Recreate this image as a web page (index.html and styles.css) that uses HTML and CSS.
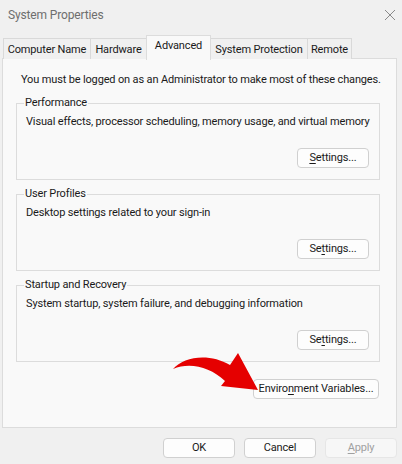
FILE: index.html
```html
<!DOCTYPE html>
<html>
<head>
<meta charset="utf-8">
<link rel="stylesheet" href="styles.css">
</head>
<body>
<div class="window">
  <div class="titlebar">
    <span class="title">System Properties</span>
    <svg class="close" width="12" height="12" viewBox="0 0 12 12"><path d="M1 1 L11 11 M11 1 L1 11" stroke="#8a8a8a" stroke-width="1" fill="none"/></svg>
  </div>
  <div class="tabs">
    <div class="tab t1">Computer Name</div>
    <div class="tab t2">Hardware</div>
    <div class="tab t3 active">Advanced</div>
    <div class="tab t4">System Protection</div>
    <div class="tab t5">Remote</div>
  </div>
  <div class="panel">
    <p class="note">You must be logged on as an Administrator to make most of these changes.</p>
    <fieldset class="group">
      <legend>Performance</legend>
      <p class="desc">Visual effects, processor scheduling, memory usage, and virtual memory</p>
      <div class="row"><button class="btn"><u>S</u>ettings...</button></div>
    </fieldset>
    <fieldset class="group">
      <legend>User Profiles</legend>
      <p class="desc">Desktop settings related to your sign-in</p>
      <div class="row"><button class="btn">Se<u>t</u>tings...</button></div>
    </fieldset>
    <fieldset class="group">
      <legend>Startup and Recovery</legend>
      <p class="desc">System startup, system failure, and debugging information</p>
      <div class="row"><button class="btn">Se<u>t</u>tings...</button></div>
    </fieldset>
    <div class="envrow"><button class="btn env">Enviro<u>n</u>ment Variables...</button></div>
  </div>
  <div class="footer">
    <button class="btn foot">OK</button>
    <button class="btn foot">Cancel</button>
    <button class="btn foot disabled"><u>A</u>pply</button>
  </div>
  <svg class="arrow" width="100" height="50" viewBox="0 0 100 50">
    <path d="M1 17 C 12 4, 38 1, 58 13 L 66 1 L 86 38 L 49 34 L 53 29 C 38 15, 18 10, 1 17 Z" fill="#e50000"/>
  </svg>
</div>
</body>
</html>
```
FILE: styles.css
```css
html, body {
  margin: 0;
  padding: 0;
}
body {
  width: 402px;
  height: 464px;
  background: #f0f0f0;
  font-family: Roboto, "Liberation Sans", sans-serif;
  font-size: 11px;
  letter-spacing: -0.15px;
  color: #1a1a1a;
  overflow: hidden;
}
.window {
  position: relative;
  width: 402px;
  height: 464px;
}
.titlebar {
  height: 35px;
  display: flex;
  align-items: flex-start;
  justify-content: space-between;
}
.title {
  margin: 8px 0 0 8px;
  font-size: 12px;
  color: #6e6e6e;
}
.close {
  margin: 9px 6px 0 0;
}
.tabs {
  display: flex;
  align-items: flex-end;
  height: 24px;
  margin-left: 3px;
  position: relative;
  z-index: 2;
}
.tab {
  line-height: 21px;
  border: 1px solid #d9d9d9;
  border-bottom: none;
  border-right: none;
  background: #f0f0f0;
  text-align: center;
  box-sizing: border-box;
  height: 21px;
  white-space: nowrap;
}
.tab.t5 { border-right: 1px solid #d9d9d9; }
.t1 { width: 87px; }
.t2 { width: 56px; }
.t3 { width: 65px; }
.t4 { width: 96px; }
.t5 { width: 45px; }
.tab.active {
  line-height: 20px;
  background: #f9f9f9;
  border: 1px solid #dcdcdc;
  border-bottom: none;
  margin-bottom: -1px;
  height: 25px;
}
.tab.active + .tab { border-left: none; }
.panel {
  margin: -1px 5px 0 2px;
  height: 370px;
  box-sizing: border-box;
  border: 1px solid #dcdcdc;
  background: #f9f9f9;
  padding: 13px 16px 0 13px;
  position: relative;
  z-index: 1;
}
.note {
  margin: 0 0 8px 5px;
  line-height: 16px;
  white-space: nowrap;
}
.group {
  margin: 0 0 7px 0;
  padding: 0 10px 0 9px;
  border: 1px solid #dcdcdc;
  height: 84px;
  box-sizing: border-box;
  min-width: 0;
}
.group legend {
  padding: 0 1px;
  margin-left: -2px;
  line-height: 14px;
}
.desc {
  margin: 4px 0 0 0;
  line-height: 16px;
  white-space: nowrap;
}
.row {
  display: flex;
  justify-content: flex-end;
  margin-top: 18px;
}
.btn {
  font: inherit;
  letter-spacing: inherit;
  color: #1a1a1a;
  height: 20px;
  width: 72px;
  padding: 0;
  border: 1px solid #d0d0d0;
  border-radius: 4px;
  background: #fdfdfd;
  line-height: 18px;
  white-space: nowrap;
}
.btn u { text-underline-offset: 2px; }
.envrow {
  display: flex;
  justify-content: flex-end;
  margin-top: 17px;
}
.env {
  width: 126px;
  margin-right: 1px;
}
.footer {
  display: flex;
  justify-content: flex-end;
  gap: 9px;
  padding: 10px 5px 0 0;
}
.foot { width: 72px; }
.disabled {
  color: #a0a0a0;
  border-color: #e6e6e6;
  background: #f7f7f7;
}
.arrow {
  position: absolute;
  left: 172px;
  top: 352px;
  z-index: 5;
}
```
